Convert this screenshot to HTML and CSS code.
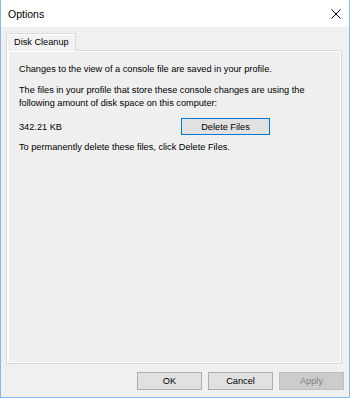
FILE: index.html
```html
<!DOCTYPE html>
<html lang="en">
<head>
  <meta charset="UTF-8" />
  <title>Options</title>
  <link rel="stylesheet" href="styles.css">
</head>
<body>
  <div class="window">
    <div class="titlebar">
      <span class="title">Options</span>
      <svg class="close" width="10" height="10" viewBox="0 0 10 10">
        <path d="M0.5 0.5 L9.5 9.5 M9.5 0.5 L0.5 9.5" stroke="#000" stroke-width="1" fill="none"/>
      </svg>
    </div>

    <div class="body">
      <div class="tabs">
        <div class="tab">Disk Cleanup</div>
      </div>
      <div class="panel">
        <p>Changes to the view of a console file are saved in your profile.</p>
        <p>The files in your profile that store these console changes are using the following amount of disk space on this computer:</p>
        <div class="size-row">
          <span class="size">342.21 KB</span>
          <button class="btn btn-focus">Delete Files</button>
        </div>
        <p>To permanently delete these files, click Delete Files.</p>
      </div>
      <div class="actions">
        <button class="btn">OK</button>
        <button class="btn">Cancel</button>
        <button class="btn" disabled>Apply</button>
      </div>
    </div>
  </div>
</body>
</html>
```

FILE: styles.css
```css
body {
  margin: 0;
  font-family: 'Liberation Sans', Arial, sans-serif;
  font-size: 9.2px;
  color: #000;
  background-color: #f0f0f0;
}
.window {
  width: 350px;
  height: 398px;
  box-sizing: border-box;
  border: 1px solid #88b8ee;
  border-top: none;
  display: flex;
  flex-direction: column;
  background-color: #f0f0f0;
}
.titlebar {
  height: 27px;
  flex: none;
  background-color: #fff;
  display: flex;
  align-items: center;
  justify-content: space-between;
  padding: 1px 8px 0 7px;
  box-sizing: border-box;
}
.title {
  font-size: 10.5px;
}
.close {
  display: block;
  margin-top: -1px;
}
.body {
  flex: 1;
  display: flex;
  flex-direction: column;
  padding: 6px 7px 7px 5px;
}
.tabs {
  display: flex;
  position: relative;
  z-index: 1;
  margin-bottom: -1px;
}
.tab {
  width: 70px;
  height: 18px;
  box-sizing: border-box;
  border: 1px solid #d9d9d9;
  border-bottom: none;
  background-color: #f2f2f2;
  box-shadow: inset 1px 1px 0 #fff;
  padding: 2px 0 0 7px;
  line-height: 13px;
}
.panel {
  flex: 1;
  border: 1px solid #d9d9d9;
  box-shadow: inset 2px 1px 0 #fff, inset -1px -1px 0 #fff;
  background-color: #efefef;
  padding: 12px 12px;
}
.panel p {
  margin: 0 0 8px;
  line-height: 13px;
}
.size-row {
  display: flex;
  align-items: center;
  height: 17px;
  margin-bottom: 6px;
}
.size {
  width: 162px;
}
.btn {
  font-family: inherit;
  font-size: 9.2px;
  color: #000;
  background-color: #e1e1e1;
  border: 1px solid #adadad;
  padding: 0;
  margin: 0;
  width: 65px;
  height: 18px;
}
.btn-focus {
  width: 89px;
  height: 17px;
  border-color: #0078d7;
}
.btn:disabled {
  background-color: #cccccc;
  border-color: #bfbfbf;
  color: #838383;
}
.actions {
  display: flex;
  justify-content: flex-end;
  gap: 6px;
  margin: 8px -2px 0 0;
}
```
